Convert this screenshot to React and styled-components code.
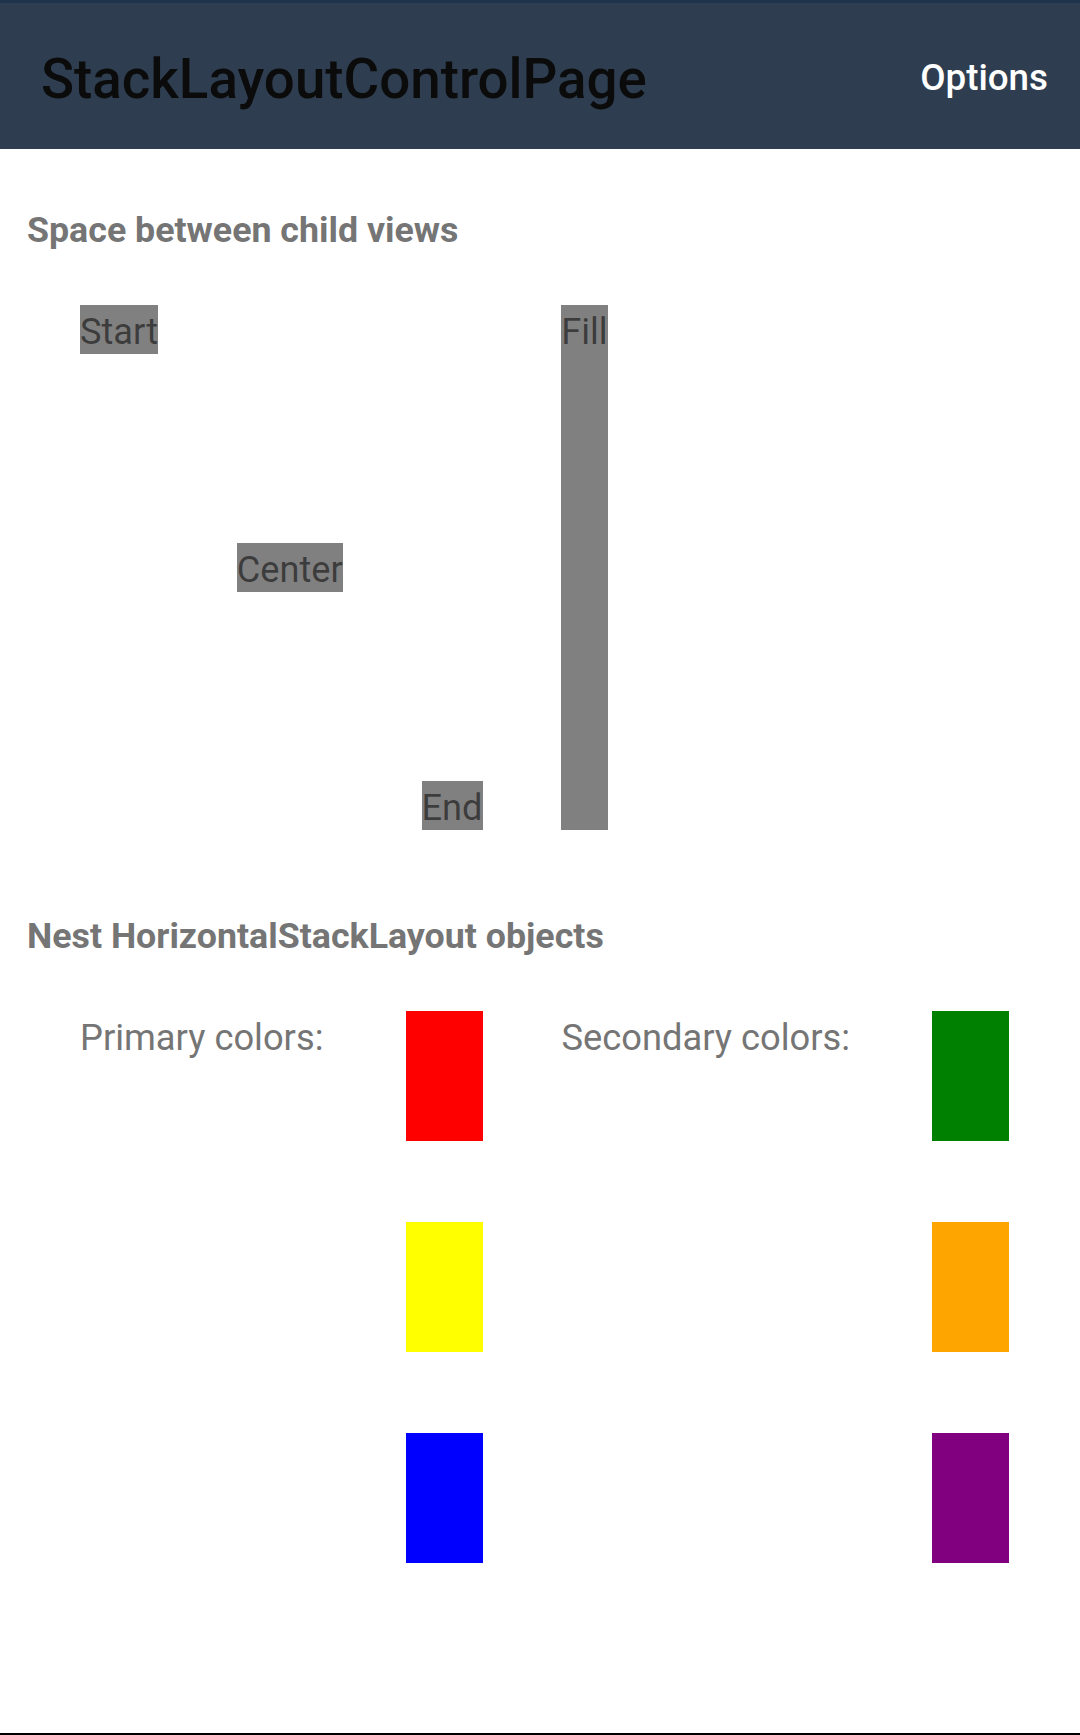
import React from 'react';
import styled, { createGlobalStyle } from 'styled-components';

const GlobalStyle = createGlobalStyle`
  html, body {
    margin: 0;
    padding: 0;
    background: #ffffff;
  }
  body {
    font-family: Roboto, "Noto Sans", sans-serif;
  }
`;

const Screen = styled.div`
  min-height: 100vh;
  box-sizing: border-box;
  display: flex;
  flex-direction: column;
  border-bottom: 2px solid #000000;
`;

const Toolbar = styled.header`
  height: 149px;
  box-sizing: border-box;
  border-top: 3px solid #1f344b;
  background: #2e3e50;
  display: flex;
  justify-content: space-between;
  align-items: flex-start;
  padding: 0 32px 0 41px;
`;

const Title = styled.h1`
  margin: 45px 0 0;
  font-size: 54.7px;
  font-weight: 500;
  line-height: 62px;
  color: #0b0b0b;
`;

const MenuItem = styled.span`
  margin-top: 53px;
  font-size: 36.75px;
  font-weight: 500;
  line-height: 43px;
  color: #ffffff;
`;

const Content = styled.main`
  padding: 0 27px;
`;

const SectionLabel = styled.h2`
  margin: ${(p) => p.$top}px 0 0;
  padding-top: 4px;
  font-size: 35.75px;
  font-weight: 700;
  line-height: 45px;
  color: #757575;
  white-space: nowrap;
`;

const Row = styled.div`
  display: flex;
  gap: 78.75px;
  align-items: ${(p) => p.$align || 'stretch'};
  height: ${(p) => (p.$height ? `${p.$height}px` : 'auto')};
  margin: ${(p) => p.$top || 0}px 0 0 ${(p) => p.$left || 0}px;
`;

const alignments = {
  start: 'flex-start',
  center: 'center',
  end: 'flex-end',
  fill: 'stretch',
};

const Item = styled.span`
  align-self: ${(p) => alignments[p.$align]};
  padding-top: 4px;
  font-size: 36.2px;
  line-height: 45px;
  background: #808080;
  color: rgba(0, 0, 0, 0.54);
  white-space: nowrap;
`;

const Caption = styled.span`
  padding: 4px 3.5px 0 0;
  font-size: 36.3px;
  line-height: 45px;
  color: #757575;
  white-space: nowrap;
`;

const Column = styled.div`
  display: flex;
  flex-direction: column;
  gap: 81px;
`;

const Swatch = styled.div`
  width: 77px;
  height: 130px;
  background: ${(p) => p.$color};
`;

const groups = [
  { caption: 'Primary colors:', colors: ['red', 'yellow', 'blue'] },
  { caption: 'Secondary colors:', colors: ['green', 'orange', 'purple'] },
];

export default function App() {
  return (
    <Screen>
      <GlobalStyle />
      <Toolbar>
        <Title>StackLayoutControlPage</Title>
        <MenuItem>Options</MenuItem>
      </Toolbar>
      <Content>
        <SectionLabel $top={55}>Space between child views</SectionLabel>
        <Row $top={52} $left={53} $height={525}>
          <Item $align="start">Start</Item>
          <Item $align="center">Center</Item>
          <Item $align="end">End</Item>
          <Item $align="fill">Fill</Item>
        </Row>

        <SectionLabel $top={80}>Nest HorizontalStackLayout objects</SectionLabel>
        <Row $top={52} $left={53} $align="flex-start">
          {groups.map((g) => (
            <Row key={g.caption} $align="flex-start">
              <Caption>{g.caption}</Caption>
              <Column>
                {g.colors.map((c) => (
                  <Swatch key={c} $color={c} />
                ))}
              </Column>
            </Row>
          ))}
        </Row>
      </Content>
    </Screen>
  );
}
